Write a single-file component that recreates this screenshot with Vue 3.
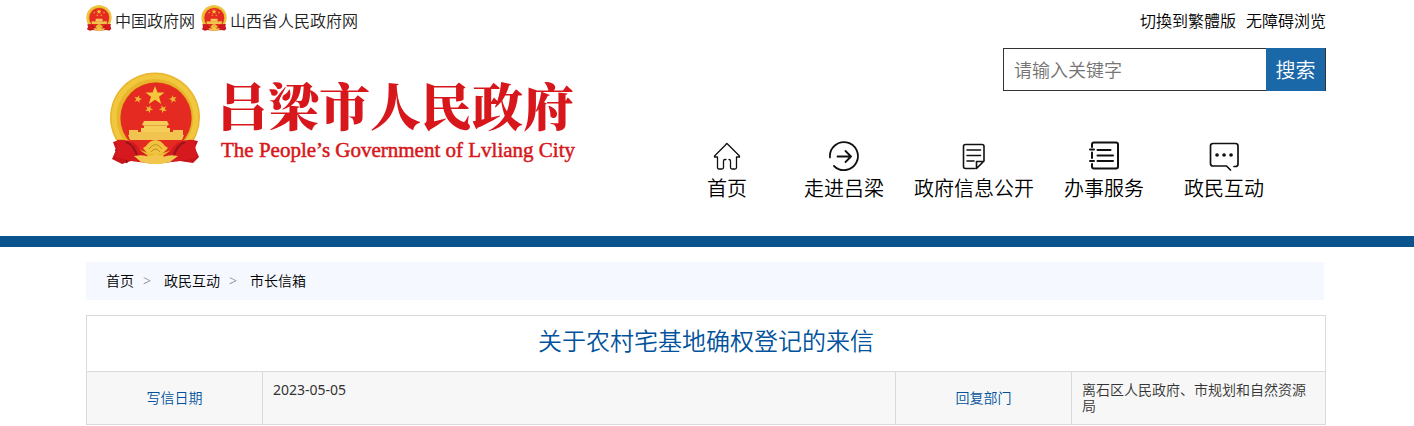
<template>
  <div class="page">
    <svg class="sprite" aria-hidden="true">
      <symbol id="emblem" viewBox="9 12 92 93">
        <path d="M23 79 L87 79 L98 81 L95 88 L99 97 L93 103 L80 101 L55 104 L31 101 L22 104 L12 99 L16 90 L13 82 Z" fill="#c8141b" />
        <path d="M22 82 L27 103 M87 82 L84 101 M15 90 L29 94 M95 89 L81 93" stroke="#8d0b12" stroke-width="1.5" fill="none" />
        <circle cx="55" cy="57.500" r="45" fill="#e8b52c" />
        <circle cx="55" cy="57.500" r="41" fill="none" stroke="#f0c73d" stroke-width="5" />
        <circle cx="56" cy="58" r="36" fill="#d79b1c" />
        <circle cx="56" cy="58" r="35.500" fill="#e52a21" />
        <path d="M55 26 L57.500 32.500 L64.500 32.600 L59 36.800 L61.200 44 L55 39.800 L48.800 44 L51 36.800 L45.500 32.600 L52.500 32.500 Z" fill="#f3c63c" />
        <path
          v-for="(star, index) in stars"
          :key="index"
          :transform="`translate(${star.x} ${star.y}) rotate(${star.turn})`"
          d="M0 -4 L1 -1.300 L4 -1.200 L1.600 .6 L2.500 3.500 L0 1.800 L-2.500 3.500 L-1.600 .6 L-4 -1.200 L-1 -1.300 Z"
          fill="#eeb733"
        />
        <path d="M44 61 H67 L69 65 H42 Z M44 65 H67 V68 H44 Z M41 68 H70 V72 H41 Z" fill="#f5cd58" />
        <path d="M29 70 H38 V72 H73 V70 H83 V75 H29 Z M28 75 H84 L82 80 H30 Z" fill="#f1c44f" />
        <path d="M43 65.500 H68" stroke="#dd9d33" stroke-width=".8" />
        <path d="M17 80 Q34 78 41 91 L48 96 L42 101 Q29 102 16 97 Z" fill="#d5191e" />
        <path d="M94 80 Q78 78 70 91 L63 96 L70 101 Q84 102 97 97 Z" fill="#d5191e" />
        <path d="M26 82 Q35 85 38 99 M85 82 Q76 85 73 99" stroke="#98131a" stroke-width="2" fill="none" />
        <path d="M46 86 Q50 80 55.500 80 Q61 80 65 86 L68 88 L62 94 H48 L43 88 Z" fill="#efc33e" />
        <path d="M49 89 Q55.500 80 62 89 M51 92 Q55.500 86 60 92" stroke="#c98b25" stroke-width="1" fill="none" />
        <path d="M34 96 Q44 94 49 97 L56 94 L63 97 Q69 94 78 96 L70 102 L61 104 H50 L41 102 Z" fill="#f2c64c" />
      </symbol>
    </svg>

    <header class="container header">
      <div class="topbar">
        <nav class="gov-links">
          <a v-for="site in sites" :key="site" href="#">
            <svg class="mini-emblem" aria-hidden="true"><use href="#emblem" /></svg>
            <span>{{ site }}</span>
          </a>
        </nav>
        <div class="tools">
          <a href="#">切換到繁體版</a>
          <a href="#">无障碍浏览</a>
        </div>
      </div>

      <div class="header-main">
        <a class="brand" href="#">
          <svg class="brand-emblem" aria-hidden="true"><use href="#emblem" /></svg>
          <span class="brand-text">
            <span class="brand-name">吕梁市人民政府</span>
            <span class="brand-en">The People’s Government of Lvliang City</span>
          </span>
        </a>

        <div class="header-side">
          <form class="search" @submit.prevent>
            <input v-model="keyword" type="text" placeholder="请输入关键字" aria-label="请输入关键字" />
            <button type="submit">搜索</button>
          </form>

          <nav class="main-nav">
            <a href="#">
              <svg viewBox="0 0 32 32" stroke-width="1.300">
                <path d="M16 3.500 L28.500 16 V17 H25.500 V27.500 Q25.500 29 24 29 H21 Q19.500 29 19.500 27.500 V21 Q19.500 19.500 18 19.500 M15 19.500 H14 Q12.500 19.500 12.500 21 V27.500 Q12.500 29 11 29 H8 Q6.500 29 6.500 27.500 V17 H3.500 V16 L14 5.500 Q15.500 3.500 16 3.500" />
              </svg>
              <span>首页</span>
            </a>
            <a href="#">
              <svg viewBox="0 0 32 32" stroke-width="1.800">
                <path d="M2 17.500 A14 14 0 1 1 6 26 M9.500 16.500 H23 M17.500 11 L23 16.500 L17.500 22" />
              </svg>
              <span>走进吕梁</span>
            </a>
            <a href="#">
              <svg viewBox="0 0 32 32" stroke-width="1.600">
                <path d="M17 28.500 H7.500 Q5.500 28.500 5.500 26.500 V6.500 Q5.500 4.500 7.500 4.500 H24 Q26 4.500 26 6.500 V21 L18.500 28.500 V21.500 H25.500 M9 10 H22.500 M9 15.500 H22.500 M9 21 H16" />
              </svg>
              <span>政府信息公开</span>
            </a>
            <a href="#">
              <svg viewBox="0 0 32 32" stroke-width="2">
                <path d="M4 7 V4.500 Q4 2.500 6 2.500 H28 Q30 2.500 30 4.500 V26.500 Q30 28.500 28 28.500 H6 Q4 28.500 4 26.500 V24 M4 12.500 V18 M2 9.500 H6 M2 21 H6 M9.500 10 H22.500 M9.500 15.500 H25 M9.500 21 H25" />
              </svg>
              <span>办事服务</span>
            </a>
            <a href="#">
              <svg viewBox="0 0 32 32" stroke-width="1.700">
                <path d="M26 26.500 H27.500 Q30 26.500 30 24 V6 Q30 3.500 27.500 3.500 H5 Q2.500 3.500 2.500 6 V23.500 Q2.500 26 5 26 H18.500 L22.500 30" />
                <path d="M9 15 H9.100 M16 15 H16.100 M23 15 H23.100" stroke-width="3.600" />
              </svg>
              <span>政民互动</span>
            </a>
          </nav>
        </div>
      </div>
    </header>

    <div class="divider"></div>

    <main class="container">
      <nav class="breadcrumb">
        <template v-for="(crumb, index) in crumbs" :key="crumb">
          <span v-if="index" class="sep">&gt;</span>
          <a href="#">{{ crumb }}</a>
        </template>
      </nav>

      <table class="letter">
        <colgroup>
          <col class="col-label" />
          <col />
          <col class="col-label" />
          <col class="col-dept" />
        </colgroup>
        <thead>
          <tr>
            <th class="letter-title" colspan="4">关于农村宅基地确权登记的来信</th>
          </tr>
        </thead>
        <tbody>
          <tr>
            <th scope="row">写信日期</th>
            <td class="date">2023-05-05</td>
            <th scope="row">回复部门</th>
            <td>离石区人民政府、市规划和自然资源局</td>
          </tr>
        </tbody>
      </table>
    </main>
  </div>
</template>

<script setup>
import { ref } from 'vue'

const keyword = ref('')
const sites = ['中国政府网', '山西省人民政府网']
const crumbs = ['首页', '政民互动', '市长信箱']

// 国徽上的四颗小星
const stars = [
  { x: 38, y: 39, turn: 15 },
  { x: 49, y: 49, turn: 25 },
  { x: 63, y: 49, turn: -25 },
  { x: 73, y: 39, turn: -15 }
]
</script>

<style>
body {
  margin: 0;
  background: #fff;
}
</style>

<style scoped>
.page {
  font-family: "Noto Sans", "Noto Sans CJK SC", sans-serif;
  font-size: 14px;
  font-weight: 350;
  color: #333;
}
.sprite {
  position: absolute;
  width: 0;
  height: 0;
}
a {
  color: #000;
  text-decoration: none;
}
.container {
  box-sizing: border-box;
  max-width: 1242px;
  margin: 0 auto;
  padding-right: 2px;
}
.topbar {
  display: flex;
  justify-content: space-between;
  height: 48px;
  font-size: 16px;
  line-height: 42px;
}
.gov-links,
.tools {
  display: flex;
}
.gov-links {
  gap: 6px;
}
.gov-links a {
  display: flex;
  gap: 3px;
  color: #222;
}
.mini-emblem {
  width: 26px;
  height: 26px;
  margin-top: 5px;
}
.tools {
  gap: 10px;
}
.header-main {
  display: flex;
  justify-content: space-between;
  height: 188px;
}
.brand {
  display: flex;
  align-items: flex-start;
  gap: 16px;
  padding: 24px 0 0 23px;
  color: #d7171b;
}
.brand-emblem {
  width: 92px;
  height: 93px;
}
.brand-text {
  display: flex;
  flex-direction: column;
  padding-top: 2px;
  white-space: nowrap;
}
.brand-name {
  font-family: "Noto Serif CJK SC", "Noto Sans CJK SC", serif;
  font-size: 51px;
  font-weight: 900;
  line-height: 60px;
}
.brand-en {
  padding-left: 4px;
  font-family: "Liberation Serif", serif;
  font-size: 21px;
  font-weight: 400;
  line-height: 32px;
  -webkit-text-stroke: 0.5px #d7171b;
}
.header-side {
  display: flex;
  flex-direction: column;
  align-items: flex-end;
}
.search {
  box-sizing: border-box;
  display: flex;
  width: 323px;
  height: 43px;
  border: 1px solid #333;
}
.search input {
  flex: 1;
  min-width: 0;
  padding: 0 10px;
  border: 0;
  outline: none;
  background: #fff;
  font: inherit;
  font-size: 18px;
}
.search input::placeholder {
  color: #757575;
}
.search button {
  width: 60px;
  margin: -1px -1px -1px 0;
  padding: 0;
  border: 0;
  border-right: 1px solid #333;
  background: #1b68a9;
  color: #fff;
  font: inherit;
  font-size: 20px;
  cursor: pointer;
}
.main-nav {
  display: grid;
  grid-template-columns: 114px 120px 140px 120px 120px;
  margin: 49px 42px 0 0;
}
.main-nav a {
  display: flex;
  flex-direction: column;
  align-items: center;
  font-size: 20px;
  line-height: 34px;
  white-space: nowrap;
}
.main-nav svg {
  width: 32px;
  height: 32px;
  fill: none;
  stroke: #111;
  stroke-linecap: round;
  stroke-linejoin: round;
}
.divider {
  height: 11px;
  background: #0a538d;
}
.breadcrumb {
  display: flex;
  height: 38px;
  margin: 15px 2px 15px 0;
  padding-left: 20px;
  background: #f5f8ff;
  line-height: 38px;
}
.breadcrumb .sep {
  width: 30px;
  padding-left: 9px;
  box-sizing: border-box;
  color: #888;
}
.letter {
  width: 100%;
  border-collapse: collapse;
  table-layout: fixed;
}
.col-label {
  width: 176px;
}
.col-dept {
  width: 254px;
}
.letter th,
.letter td {
  border: 1px solid #dadada;
  font-weight: 350;
}
.letter tbody th,
.letter tbody td {
  height: 32px;
  padding: 10px;
  background: #f7f7f7;
  line-height: 16px;
}
.letter tbody th {
  color: #00529c;
}
.letter tbody td {
  text-align: left;
  vertical-align: top;
}
.letter tbody .date {
  font-weight: 400;
}
.letter .letter-title {
  height: 50px;
  padding: 0 0 5px;
  color: #00529c;
  font-size: 24px;
  line-height: 50px;
}
</style>
